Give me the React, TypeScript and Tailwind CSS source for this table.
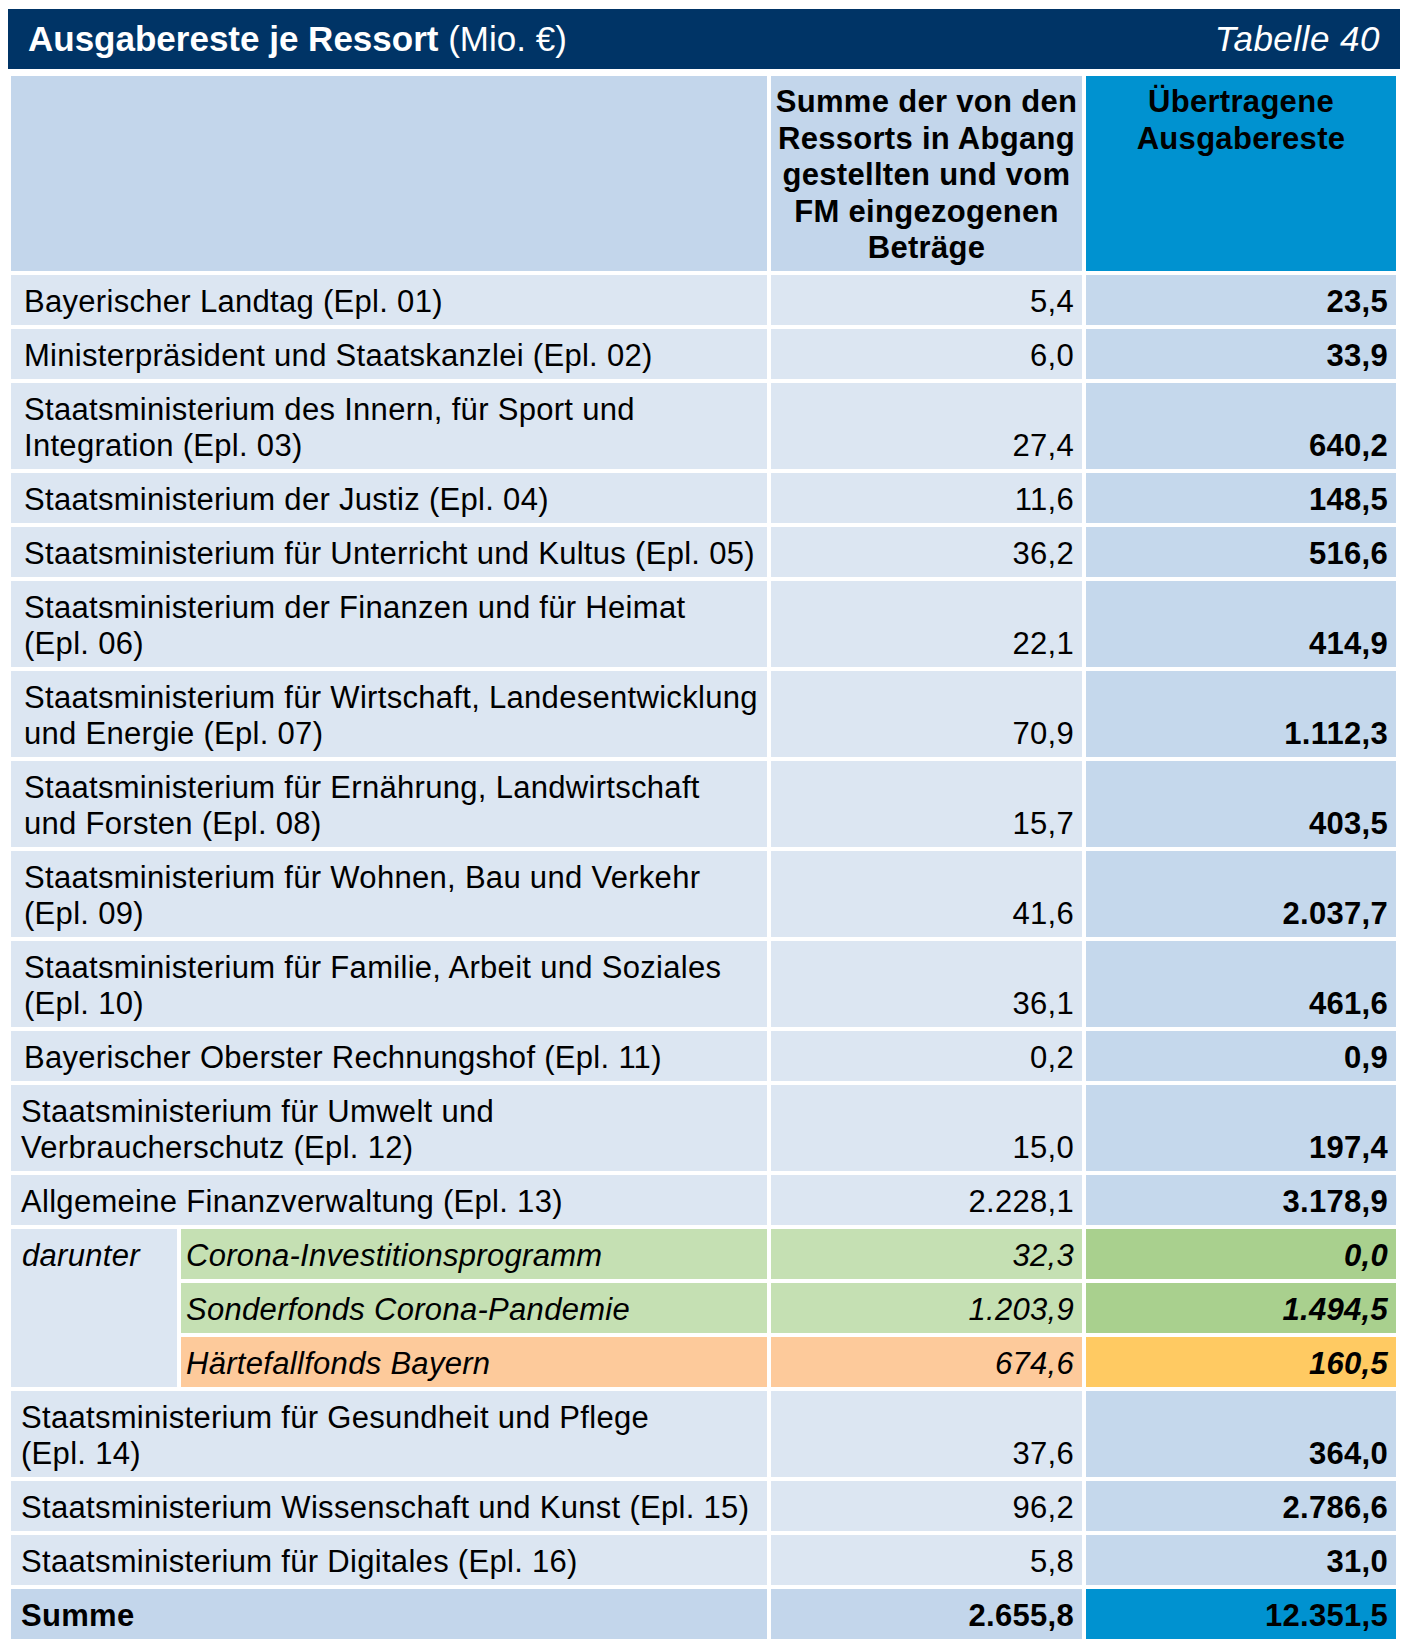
import React from "react";

// One table row: label lines, the two amounts, and how the label is indented
interface Row {
  lines: string[];
  drawn: string;
  carried: string;
  indent?: "wide" | "narrow";
}

const rows: Row[] = [
  { lines: ["Bayerischer Landtag (Epl. 01)"], drawn: "5,4", carried: "23,5" },
  { lines: ["Ministerpräsident und Staatskanzlei (Epl. 02)"], drawn: "6,0", carried: "33,9" },
  {
    lines: ["Staatsministerium des Innern, für Sport und", "Integration (Epl. 03)"],
    drawn: "27,4",
    carried: "640,2",
  },
  { lines: ["Staatsministerium der Justiz (Epl. 04)"], drawn: "11,6", carried: "148,5" },
  { lines: ["Staatsministerium für Unterricht und Kultus (Epl. 05)"], drawn: "36,2", carried: "516,6" },
  {
    lines: ["Staatsministerium der Finanzen und für Heimat", "(Epl. 06)"],
    drawn: "22,1",
    carried: "414,9",
  },
  {
    lines: ["Staatsministerium für Wirtschaft, Landesentwicklung", "und Energie (Epl. 07)"],
    drawn: "70,9",
    carried: "1.112,3",
  },
  {
    lines: ["Staatsministerium für Ernährung, Landwirtschaft", "und Forsten (Epl. 08)"],
    drawn: "15,7",
    carried: "403,5",
  },
  {
    lines: ["Staatsministerium für Wohnen, Bau und Verkehr", "(Epl. 09)"],
    drawn: "41,6",
    carried: "2.037,7",
  },
  {
    lines: ["Staatsministerium für Familie, Arbeit und Soziales", "(Epl. 10)"],
    drawn: "36,1",
    carried: "461,6",
  },
  { lines: ["Bayerischer Oberster Rechnungshof (Epl. 11)"], drawn: "0,2", carried: "0,9" },
  {
    lines: ["Staatsministerium für Umwelt und", "Verbraucherschutz (Epl. 12)"],
    drawn: "15,0",
    carried: "197,4",
    indent: "narrow",
  },
  { lines: ["Allgemeine Finanzverwaltung (Epl. 13)"], drawn: "2.228,1", carried: "3.178,9", indent: "narrow" },
];

const subRows = [
  { label: "Corona-Investitionsprogramm", drawn: "32,3", carried: "0,0", left: "bg-[#c5e0b3]", right: "bg-[#a9d08e]" },
  { label: "Sonderfonds Corona-Pandemie", drawn: "1.203,9", carried: "1.494,5", left: "bg-[#c5e0b3]", right: "bg-[#a9d08e]" },
  { label: "Härtefallfonds Bayern", drawn: "674,6", carried: "160,5", left: "bg-[#fdca9b]", right: "bg-[#ffca62]" },
];

const tailRows: Row[] = [
  {
    lines: ["Staatsministerium für Gesundheit und Pflege", "(Epl. 14)"],
    drawn: "37,6",
    carried: "364,0",
    indent: "narrow",
  },
  { lines: ["Staatsministerium Wissenschaft und Kunst (Epl. 15)"], drawn: "96,2", carried: "2.786,6", indent: "narrow" },
  { lines: ["Staatsministerium für Digitales (Epl. 16)"], drawn: "5,8", carried: "31,0", indent: "narrow" },
];

function TableRow({ row }: { row: Row }) {
  const pad = row.indent === "narrow" ? "pl-[10px]" : "pl-[13px]";
  return (
    <>
      <div className={`col-span-2 bg-[#dce6f2] pt-[9px] pb-[5px] ${pad}`}>
        {row.lines.map((line) => (
          <div key={line} className="whitespace-nowrap">
            {line}
          </div>
        ))}
      </div>
      <div className="flex items-end justify-end bg-[#dce6f2] pt-[9px] pb-[5px] pr-[8px]">{row.drawn}</div>
      <div className="flex items-end justify-end bg-[#c5d8ec] pt-[9px] pb-[5px] pr-[8px] font-bold">
        {row.carried}
      </div>
    </>
  );
}

export default function App() {
  return (
    <div
      className="bg-white pt-[9px] pl-[8px] text-black"
      style={{ fontFamily: '"Liberation Sans", Arial, sans-serif' }}
    >
      <div className="flex h-[60px] w-[1392px] items-center justify-between bg-[#003466] px-[20px] text-[35px] text-white">
        <div>
          <span className="font-bold">Ausgabereste je Ressort</span> (Mio. €)
        </div>
        <div className="italic tracking-[0.5px]">Tabelle 40</div>
      </div>

      <div className="mt-[7px] ml-[3px] grid grid-cols-[166px_586px_311px_310px] gap-[4px] text-[31px] leading-[36px] tracking-[0.3px]">
        {/* header */}
        <div className="col-span-2 h-[195px] bg-[#c3d6eb]" />
        <div className="bg-[#c3d6eb] pt-[8px] text-center font-bold leading-[36.5px] whitespace-nowrap">
          Summe der von den
          <br />
          Ressorts in Abgang
          <br />
          gestellten und vom
          <br />
          FM eingezogenen
          <br />
          Beträge
        </div>
        <div className="bg-[#0092d0] pt-[8px] text-center font-bold leading-[36.5px]">
          Übertragene
          <br />
          Ausgabereste
        </div>

        {rows.map((row) => (
          <TableRow key={row.lines[0]} row={row} />
        ))}

        {/* darunter block */}
        <div className="row-span-3 bg-[#dce6f2] pt-[9px] pb-[5px] pl-[11px] italic">darunter</div>
        {subRows.map((sub) => (
          <React.Fragment key={sub.label}>
            <div className={`${sub.left} pt-[9px] pb-[5px] pl-[5px] italic whitespace-nowrap`}>{sub.label}</div>
            <div className={`${sub.left} flex items-end justify-end pt-[9px] pb-[5px] pr-[8px] italic`}>
              {sub.drawn}
            </div>
            <div className={`${sub.right} flex items-end justify-end pt-[9px] pb-[5px] pr-[8px] font-bold italic`}>
              {sub.carried}
            </div>
          </React.Fragment>
        ))}

        {tailRows.map((row) => (
          <TableRow key={row.lines[0]} row={row} />
        ))}

        {/* total */}
        <div className="col-span-2 bg-[#c3d6eb] pt-[9px] pb-[5px] pl-[10px] font-bold">Summe</div>
        <div className="flex items-end justify-end bg-[#c3d6eb] pt-[9px] pb-[5px] pr-[8px] font-bold">2.655,8</div>
        <div className="flex items-end justify-end bg-[#0092d0] pt-[9px] pb-[5px] pr-[8px] font-bold">12.351,5</div>
      </div>
    </div>
  );
}
